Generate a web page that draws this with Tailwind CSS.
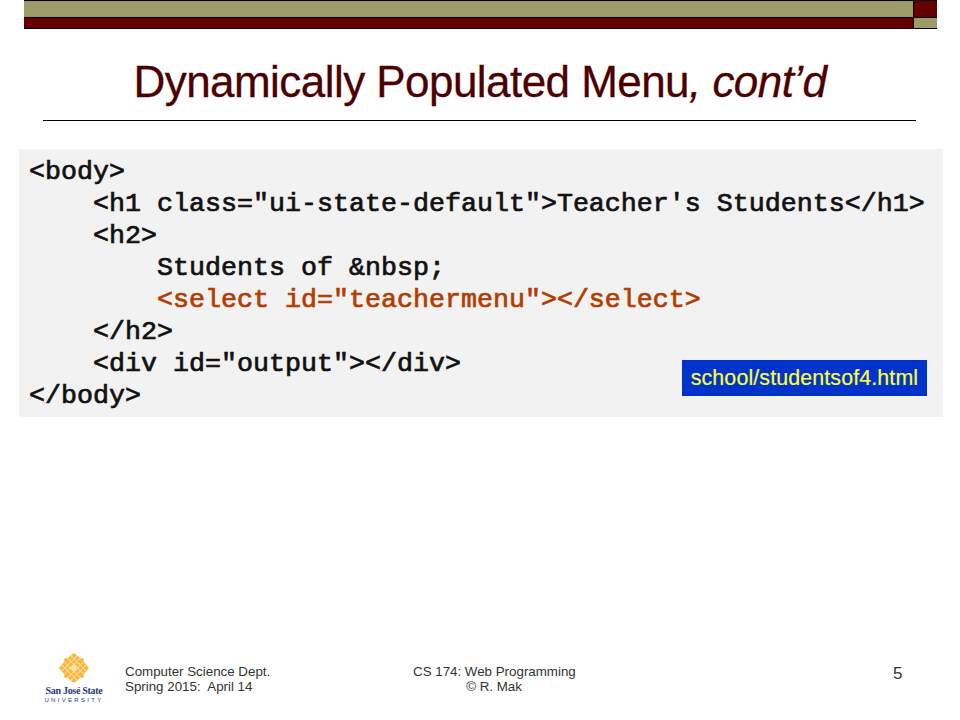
<!DOCTYPE html>
<html>
<head>
<meta charset="utf-8">
<script src="https://cdn.jsdelivr.net/npm/@tailwindcss/browser@4"></script>
</head>
<body class="bg-white">
<div class="w-[960px] h-[720px] overflow-hidden flex flex-col font-['Liberation_Sans',sans-serif]">
  <!-- top bars -->
  <div class="ml-6 w-[913px] h-[29px] border-b border-black flex flex-col bg-black">
    <div class="flex h-[17px] border-t border-black">
      <div class="flex-1 bg-[#9c9c68]"></div>
      <div class="w-px bg-black"></div>
      <div class="w-[23px] bg-[#660000]"></div>
    </div>
    <div class="h-px bg-black"></div>
    <div class="flex h-[10px]">
      <div class="flex-1 bg-[#660000]"></div>
      <div class="w-px bg-black"></div>
      <div class="w-[23px] bg-[#9c9c68]"></div>
    </div>
  </div>

  <h1 class="mt-[27px] h-[52px] text-center text-[44px] leading-[52px] tracking-[-0.55px] text-[#4c0000] font-normal [-webkit-text-stroke:0.3px_#4c0000]">Dynamically Populated Menu<i>, cont’d</i></h1>
  <div class="mt-3 mr-[44px] h-px bg-black ml-[43px]"></div>

  <!-- code block -->
  <div class="relative mt-7 ml-[19px] w-[924px] h-[268px] pt-[7px] pl-[10px] bg-[#f2f2f2] text-[26.67px] leading-[32px] text-[#111111] [-webkit-text-stroke:0.7px_#111111]">
    <pre class="font-['Liberation_Mono',monospace]">&lt;body&gt;</pre>
    <pre class="font-['Liberation_Mono',monospace]">    &lt;h1 class="ui-state-default"&gt;Teacher's Students&lt;/h1&gt;</pre>
    <pre class="font-['Liberation_Mono',monospace]">    &lt;h2&gt;</pre>
    <pre class="font-['Liberation_Mono',monospace]">        Students of &amp;nbsp;</pre>
    <pre class="font-['Liberation_Mono',monospace] text-[#b33c00] [-webkit-text-stroke:0.7px_#b33c00]">        &lt;select id="teachermenu"&gt;&lt;/select&gt;</pre>
    <pre class="font-['Liberation_Mono',monospace]">    &lt;/h2&gt;</pre>
    <pre class="font-['Liberation_Mono',monospace]">    &lt;div id="output"&gt;&lt;/div&gt;</pre>
    <pre class="font-['Liberation_Mono',monospace]">&lt;/body&gt;</pre>
    <div class="absolute left-[663px] top-[211px] w-[245px] h-9 bg-[#0033cc] text-[#ffff33] [-webkit-text-stroke:0.2px_#ffff33] font-['Liberation_Sans',sans-serif] text-[21.33px] leading-9 text-center tracking-[0.15px]">school/studentsof4.html</div>
  </div>

  <!-- footer -->
  <div class="mt-auto mb-[16px] ml-[44px] flex items-start text-[#333333]">
    <div class="w-[60px] flex flex-col items-center">
      <svg width="30" height="32" viewBox="0 0 34 34" class="block">
        <path d="M17 0L24 6H28V10L34 17L28 24V28H24L17 34L10 28H6V24L0 17L6 10V6H10Z" fill="#f9b83c"/>
        <g stroke="#fff" stroke-width="1" fill="none" opacity="0.75">
          <path d="M10 6L28 24M6 10L24 28M13.5 3L31 20.5M3 13.5L20.5 31"/>
          <path d="M24 6L6 24M28 10L10 28M20.5 3L3 20.5M31 13.5L13.5 31"/>
        </g>
        <path d="M17 12l5 5-5 5-5-5z" fill="#fde3a8"/>
      </svg>
      <div class="mt-[2px] text-[10px] leading-[10px] font-bold text-[#1f3a7a] whitespace-nowrap tracking-[-0.3px] font-['Liberation_Serif',serif]">San José State</div>
      <div class="mt-px text-[6px] leading-[7px] text-[#1f3a7a] whitespace-nowrap tracking-[2.3px]">UNIVERSITY</div>
    </div>
    <div class="ml-[21px] w-[288px] mt-[12px] text-[13.33px] leading-[15px] text-[#333333]">
      <div class="whitespace-pre">Computer Science Dept.</div>
      <div class="whitespace-pre">Spring 2015:  April 14</div>
    </div>
    <div class="w-[162px] mt-[12px] text-[13.33px] leading-[15px] text-center whitespace-nowrap text-[#333333]">
      <div>CS 174: Web Programming</div>
      <div>© R. Mak</div>
    </div>
    <div class="ml-[318px] mt-[13px] text-[17px] leading-[18px] text-[#333333]">5</div>
  </div>
</div>
</body>
</html>
